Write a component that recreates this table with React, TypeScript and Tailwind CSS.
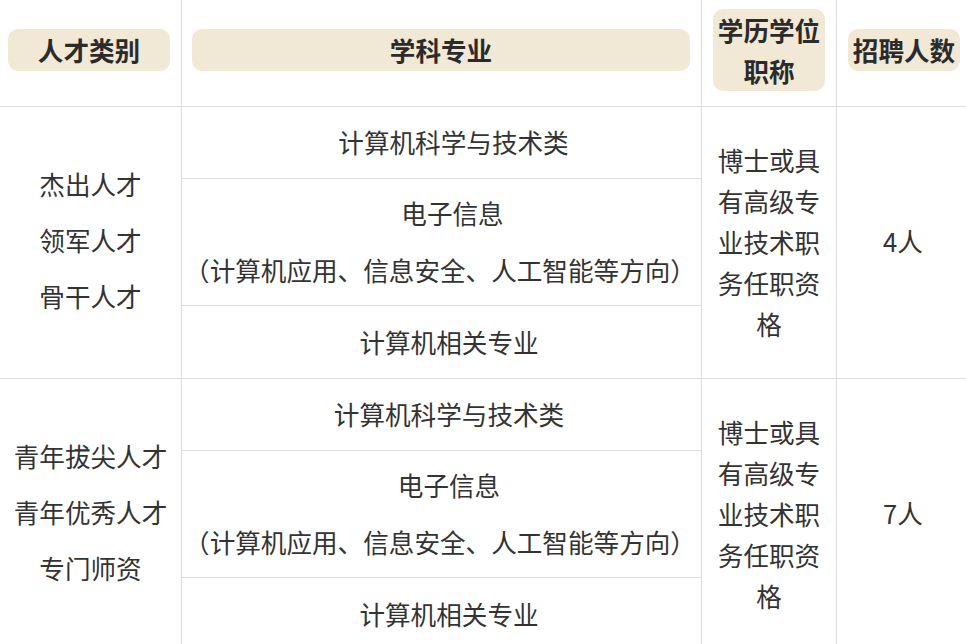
import React from "react";

// ---------------------------------------------------------------------------
// Data — two recruitment blocks, each with three discipline rows
// ---------------------------------------------------------------------------
type Block = {
  categories: string[];
  count: string;
  firstPad: string;
  infoPad: string;
};

const blocks: Block[] = [
  {
    categories: ["杰出人才", "领军人才", "骨干人才"],
    count: "4人",
    firstPad: "pl-[24px]",
    infoPad: "pl-[22px]",
  },
  {
    categories: ["青年拔尖人才", "青年优秀人才", "专门师资"],
    count: "7人",
    firstPad: "pl-[15px]",
    infoPad: "pl-[15px]",
  },
];

const requirement = "博士或具有高级专业技术职务任职资格";

// ---------------------------------------------------------------------------
// Header badge — beige rounded chip with bold label
// ---------------------------------------------------------------------------
function Badge({
  children,
  className = "",
}: {
  children: React.ReactNode;
  className?: string;
}) {
  return (
    <div
      className={`rounded-[10px] bg-[#f1e8d5] text-center font-bold text-[#2b2b2b] ${className}`}
    >
      {children}
    </div>
  );
}

function HeaderRow() {
  return (
    <div className="flex h-[107px] border-b border-[#dddddd]">
      <div className="flex w-[182px] shrink-0 items-center border-r border-[#dddddd] pb-[7px] pl-2 pr-[11px]">
        <Badge className="h-[42px] w-full leading-[42px]">人才类别</Badge>
      </div>
      <div className="flex w-[520px] shrink-0 items-center border-r border-[#dddddd] pb-[7px] pl-[10px] pr-[11px]">
        <Badge className="h-[42px] w-full leading-[42px]">学科专业</Badge>
      </div>
      <div className="flex w-[135px] shrink-0 items-center border-r border-[#dddddd] pb-[7px] pl-[11px]">
        <Badge className="w-[112px] leading-[41px]">
          学历学位
          <br />
          职称
        </Badge>
      </div>
      <div className="flex flex-1 items-center pb-[7px] pl-[11px]">
        <Badge className="h-[42px] w-[112px] shrink-0 leading-[42px]">
          招聘人数
        </Badge>
      </div>
    </div>
  );
}

// ---------------------------------------------------------------------------
// One block: categories | three discipline rows | requirement | headcount
// ---------------------------------------------------------------------------
function BlockRow({ block }: { block: Block }) {
  return (
    <div className="flex border-b border-[#dddddd]">
      <div className="flex w-[182px] shrink-0 flex-col items-center justify-center border-r border-[#dddddd] pb-[5px] leading-[56px]">
        {block.categories.map((c) => (
          <div key={c}>{c}</div>
        ))}
      </div>

      <div className="flex w-[520px] shrink-0 flex-col border-r border-[#dddddd] text-center">
        <div
          className={`flex h-[72px] items-center justify-center border-b border-[#dddddd] ${block.firstPad}`}
        >
          计算机科学与技术类
        </div>
        <div className="flex h-[127px] flex-col items-center justify-center border-b border-[#dddddd] pb-[2px] leading-[57px]">
          <div className={block.infoPad}>电子信息</div>
          <div className="pr-[3px]">（计算机应用、信息安全、人工智能等方向）</div>
        </div>
        <div className="flex h-[72px] items-center justify-center pl-[15px]">
          计算机相关专业
        </div>
      </div>

      <div className="flex w-[135px] shrink-0 items-center justify-center border-r border-[#dddddd] pb-[2px]">
        <div className="w-[103px] text-center leading-[41px]">{requirement}</div>
      </div>

      <div className="flex flex-1 items-center justify-center pb-[2px] pl-[3px]">
        {block.count}
      </div>
    </div>
  );
}

export default function App() {
  return (
    <div
      className="h-[644px] w-[966px] overflow-hidden bg-white text-[25.6px] text-[#333333]"
      style={{ fontFamily: '"Noto Sans CJK SC", "Noto Sans", sans-serif' }}
    >
      <HeaderRow />
      {blocks.map((b) => (
        <BlockRow key={b.count} block={b} />
      ))}
    </div>
  );
}
